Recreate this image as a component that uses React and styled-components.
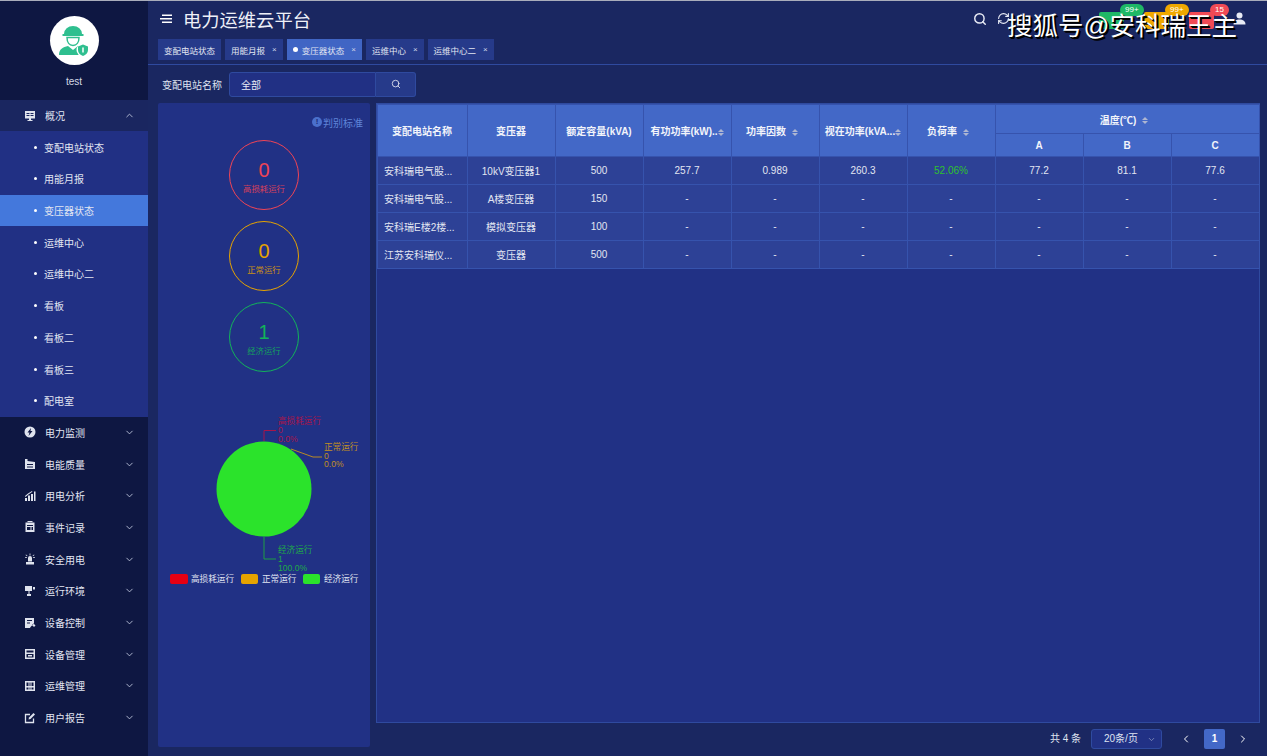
import styled, { createGlobalStyle } from "styled-components";
import { ChevronDown, ChevronUp, ChevronLeft, ChevronRight, Search, RefreshCw } from "lucide-react";

const GlobalStyle = createGlobalStyle`
  html, body {
    margin: 0;
    padding: 0;
    height: 100%;
    background: #1a2761;
  }
  body {
    font-family: "Liberation Sans", "Noto Sans CJK SC", sans-serif;
    overflow: hidden;
  }
  * { box-sizing: border-box; }
`;

const Page = styled.div`
  position: relative;
  display: flex;
  width: 1267px;
  height: 756px;
  border-top: 1px solid #a9adbb;
  overflow: hidden;
`;

const Sidebar = styled.aside`
  flex: 0 0 148px;
  display: flex;
  flex-direction: column;
  background: #0e1742;
`;

const Profile = styled.div`
  height: 99px;
  display: flex;
  flex-direction: column;
  align-items: center;
  padding-top: 15px;
`;

const Avatar = styled.div`
  width: 49px;
  height: 49px;
  border-radius: 50%;
  background: #fff;
  display: flex;
  align-items: center;
  justify-content: center;
`;

const UserName = styled.div`
  margin-top: 11px;
  color: #d5d9e6;
  font-size: 10px;
  line-height: 12px;
`;

const NavRow = styled.div`
  height: ${(p) => (p.$open ? 31.4 : 31.7)}px;
  display: flex;
  align-items: center;
  padding: 0 13px 0 24px;
  color: #e2e6f2;
  font-size: 10px;
  background: ${(p) => (p.$open ? "#1a2660" : "transparent")};
  span { margin-left: 9px; flex: 1; }
  svg.arrow { color: #b8bfd6; }
`;

const SubList = styled.div`
  background: #213084;
`;

const SubRow = styled.div`
  height: 31.7px;
  display: flex;
  align-items: center;
  padding-left: 34px;
  font-size: 10px;
  color: #e2e6f2;
  background: ${(p) => (p.$active ? "#4478dc" : "transparent")};
  &::before {
    content: "";
    width: 3px;
    height: 3px;
    border-radius: 50%;
    background: #fff;
    margin-right: 7px;
  }
`;

const Main = styled.main`
  flex: 1;
  min-width: 0;
  display: flex;
  flex-direction: column;
`;

const Header = styled.header`
  height: 37px;
  display: flex;
  align-items: center;
  padding: 0 21px 2px 12px;
  color: #fff;
`;

const Title = styled.h1`
  margin: 0 auto 0 10px;
  font-size: 18.3px;
  font-weight: 400;
  color: #eef0f8;
`;

const HeaderTool = styled.div`
  display: flex;
  color: #e8ebf5;
  margin-left: ${(p) => p.$gap || 0}px;
`;

const Notice = styled.div`
  position: relative;
  width: 25px;
  height: 17px;
  margin: 4px 0 0 ${(p) => p.$gap}px;
  border-radius: 2px;
  background: ${(p) => p.$color};
`;

const Badge = styled.span`
  position: absolute;
  top: -8px;
  left: 21px;
  height: 12px;
  padding: 0 5px;
  border-radius: 6px;
  background: ${(p) => p.$color};
  color: #fff;
  font-size: 8px;
  line-height: 12px;
  white-space: nowrap;
`;

const Watermark = styled.div`
  position: absolute;
  top: 8px;
  left: 1007px;
  color: #fff;
  font-size: 25.5px;
  line-height: 34px;
  white-space: nowrap;
  text-shadow: 1px 1px 0 #000, 2px 2px 0 #000;
`;

const TabBar = styled.nav`
  height: 27px;
  display: flex;
  gap: 4px;
  padding: 1px 10px 0;
  border-bottom: 1px solid #2f4a9f;
`;

const Tab = styled.div`
  height: 21px;
  display: flex;
  align-items: center;
  gap: 5px;
  padding: 0 6px;
  font-size: 8.5px;
  color: #e2e6f2;
  background: ${(p) => (p.$active ? "#4065c4" : "#263a8a")};
  i {
    font-style: normal;
    font-size: 8px;
    color: #cfd5e8;
    margin-left: 2px;
  }
`;

const ActiveDot = styled.b`
  width: 5px;
  height: 5px;
  border-radius: 50%;
  background: #fff;
  margin-right: -1px;
`;

const FilterRow = styled.div`
  height: 38px;
  display: flex;
  align-items: center;
  padding-left: 14px;
  label {
    font-size: 10px;
    color: #dfe3f0;
    margin-right: 7px;
  }
`;

const SelectBox = styled.div`
  width: 147px;
  height: 25px;
  display: flex;
  align-items: center;
  padding-left: 11px;
  font-size: 10px;
  color: #e8ebf5;
  background: #213084;
  border: 1px solid #2f4a9f;
  border-radius: 3px 0 0 3px;
`;

const SearchButton = styled.div`
  width: 40px;
  height: 25px;
  display: flex;
  align-items: center;
  justify-content: center;
  color: #e8ebf5;
  background: #263a8a;
  border: 1px solid #2f4a9f;
  border-left: none;
  border-radius: 0 3px 3px 0;
`;

const Content = styled.div`
  flex: 1;
  display: flex;
  gap: 6px;
  padding: 0 7px 9px 10px;
  min-height: 0;
`;

const StatusPanel = styled.section`
  flex: 0 0 212px;
  display: flex;
  flex-direction: column;
  align-items: center;
  background: #213185;
  border-radius: 2px;
`;

const JudgeLink = styled.div`
  align-self: flex-end;
  display: flex;
  align-items: center;
  gap: 1px;
  height: 12px;
  margin: 13px 7px 12px 0;
  font-size: 10px;
  color: #5f84d8;
`;

const InfoDot = styled.em`
  width: 10px;
  height: 10px;
  border-radius: 50%;
  background: #4a70cc;
  color: #1b2a78;
  font-style: normal;
  font-weight: 700;
  font-size: 8px;
  line-height: 10px;
  text-align: center;
`;

const StatusCircle = styled.div`
  width: 70px;
  height: 70px;
  margin-bottom: 11px;
  border-radius: 50%;
  border: 1px solid ${(p) => p.$color};
  color: ${(p) => p.$color};
  display: flex;
  flex-direction: column;
  align-items: center;
  justify-content: center;
  strong {
    font-size: 20px;
    line-height: 24px;
    font-weight: 400;
    margin-top: 2px;
  }
  small {
    font-size: 8.4px;
    line-height: 12px;
    margin-top: 1px;
    opacity: 0.85;
  }
`;

const PieChart = styled.svg`
  margin-top: 27px;
  display: block;
  text {
    font-size: 8.6px;
  }
`;

const TableColumn = styled.section`
  flex: 1;
  min-width: 0;
  display: flex;
  flex-direction: column;
`;

const TableWrap = styled.div`
  flex: 0 0 620px;
  background: #213185;
  border: 1px solid #2f4a9f;
`;

const Table = styled.table`
  width: 882px;
  table-layout: fixed;
  border-collapse: collapse;
  font-size: 10px;
  color: #e2e6f2;
  col { width: 88px; }
  col:first-child { width: 90px; }
  th, td {
    border: 1px solid #3653ad;
    text-align: center;
    padding: 0 1px 0 0;
    white-space: nowrap;
    overflow: hidden;
  }
  th {
    background: #4368c7;
    color: #f2f4fa;
    font-weight: 700;
  }
  thead tr:first-child { height: 29px; }
  thead tr:last-child { height: 23px; }
  td { background: #2d4196; height: 28px; }
  td:first-child { text-align: left; padding-left: 6px; }
`;

const SortWrap = styled.span`
  display: inline-flex;
  flex-direction: column;
  gap: 1px;
  margin: 0 ${(p) => (p.$tight ? 0 : 6)}px 0 ${(p) => (p.$tight ? 0 : 6)}px;
  vertical-align: middle;
  &::before, &::after {
    content: "";
    width: 0;
    height: 0;
    border-left: 3px solid transparent;
    border-right: 3px solid transparent;
  }
  &::before { border-bottom: 3px solid #aeb6d2; }
  &::after { border-top: 3px solid #aeb6d2; }
`;

const LoadRate = styled.span`
  color: #2ec22e;
`;

const Pager = styled.div`
  flex: 1;
  min-height: 0;
  display: flex;
  align-items: flex-start;
  justify-content: flex-end;
  font-size: 10px;
  line-height: 20px;
  color: #dfe3f0;
  padding: 6px 7px 0 0;
`;

const PageSize = styled.div`
  width: 71px;
  height: 20px;
  margin: 0 13px 0 10px;
  padding: 0 5px 0 12px;
  display: flex;
  align-items: center;
  justify-content: space-between;
  background: #213185;
  border: 1px solid #2f4a9f;
  border-radius: 3px;
  svg { color: #8f9ac2; }
`;

const PageLink = styled.div`
  width: 21px;
  height: 20px;
  margin-left: ${(p) => p.$gap || 0}px;
  display: flex;
  align-items: center;
  justify-content: center;
  border-radius: 2px;
  color: #fff;
  font-weight: ${(p) => (p.$active ? 700 : 400)};
  background: ${(p) => (p.$active ? "#4368c7" : "transparent")};
`;

const WorkerIcon = () => (
  <svg width="34" height="34" viewBox="0 0 34 34" fill="#2fbf8f">
    <path d="M7 10a9 8 0 0 1 18 0h1.5v2h-21v-2z" />
    <path d="M10 13.5h12c0 5-2.5 8-6 8s-6-3-6-8z" fill="none" stroke="#2fbf8f" strokeWidth="1.5" />
    <path d="M2 31c0-6 4-8 9-9l5 4 5-4c2 .4 3 1 4 1.5V31z" />
    <circle cx="26" cy="26" r="6.5" fill="#fff" />
    <path d="M26 20.5l5 2v3.5c0 3-2.2 5-5 6-2.8-1-5-3-5-6v-3.5z" />
    <path d="M26 23.5v5" stroke="#fff" strokeWidth="1.5" />
  </svg>
);

const iconPaths = {
  monitor: "M1 1h10v7.5H7V10h1.5v1h-5v-1H5V8.5H1zM2.500 3v1h3V3zm4 0v1h3V3zm-4 2v1h3V5zm4 0v1h3V5z",
  power: "M6 .5a5.5 5.5 0 1 0 0 11 5.5 5.5 0 0 0 0-11zM7 2L3.5 6.5h2L4.5 10l4-5h-2z",
  quality: "M1 1h2.5v2l7.5 1v7H1zM3 6v1h6V6zm0 2.5v1h6v-1z",
  usage: "M1 8h2v3H1zm3-2.5h2V11H4zM7 4h2v7H7zm3-2.500h1.500V11H10zM1 6l3-2.5L8 1l.4.7-4 2.800L1.5 7z",
  event: "M1.500 1.500h9V11h-9zM3.500 0h5v2h-5zM3 4v1h6V4zm0 2v3h3.500V6zm4.500 0v3H9V6z",
  safety: "M4 5a2 2 0 0 1 4 0v3.500H4zM2 9h8v2.500H2zM5.600 .5h.8v2h-.8zM1 4h2v.8H1zm8 0h2v.8H9zM2 1.500l1.500 1.200-.5.6L1.500 2zm8 0l.5.5L9 3.300l-.5-.6z",
  environment: "M1 1h7v5H5.500v3H7v2H3V9h1.500V6H1zM9 2h2v2.500H9z",
  control: "M1 1h9v5.500L6.500 10 6 11H1zm2 2v1h5V3zm0 2.500v1h3v-1zM8 8l1.500-1.500 2 2L10 10z",
  device: "M1 1h10v10H1zm1.500 1.500v2h7v-2zm0 3.500v3.500h7V6zM4 7h4v1.500H4z",
  ops: "M1 1h10v10H1zm1.500 1.500V6h2V2.500zm3 0V6h1V2.500zm2 0V6h2V2.500zM2.500 7.500v2h2v-2zm3 0v2h1v-2zm2 0v2h2v-2z",
};

const NavIcon = ({ name }) => (
  <svg width="12" height="12" viewBox="0 0 12 12" fill="#dfe3ee" fillRule="evenodd">
    {name === "report" ? (
      <>
        <path d="M9.500 6.500v4h-8v-8H6" fill="none" stroke="#dfe3ee" strokeWidth="1.3" />
        <path d="M4.500 7.500l.5-2L9.500 1 11 2.500 6.500 7z" />
      </>
    ) : (
      <path d={iconPaths[name]} />
    )}
  </svg>
);

const MenuFold = () => (
  <svg width="13" height="12" viewBox="0 0 13 12" fill="#fff">
    <rect x="2" y="1.5" width="10" height="1.5" />
    <rect x="0" y="5" width="12" height="1.5" />
    <rect x="2" y="8.5" width="10" height="1.5" />
  </svg>
);

const UserIcon = () => (
  <svg width="13" height="13" viewBox="0 0 13 13" fill="#e8ebf5">
    <circle cx="6.5" cy="3.5" r="3" />
    <path d="M.5 12.500c0-3.500 2.500-5 6-5s6 1.500 6 5z" />
  </svg>
);

const subMenu = ["变配电站状态", "用能月报", "变压器状态", "运维中心", "运维中心二", "看板", "看板二", "看板三", "配电室"];

const mainMenu = [
  ["power", "电力监测"],
  ["quality", "电能质量"],
  ["usage", "用电分析"],
  ["event", "事件记录"],
  ["safety", "安全用电"],
  ["environment", "运行环境"],
  ["control", "设备控制"],
  ["device", "设备管理"],
  ["ops", "运维管理"],
  ["report", "用户报告"],
];

const tabs = [
  { label: "变配电站状态" },
  { label: "用能月报", close: true },
  { label: "变压器状态", close: true, active: true },
  { label: "运维中心", close: true },
  { label: "运维中心二", close: true },
];

const rows = [
  ["安科瑞电气股...", "10kV变压器1", "500", "257.7", "0.989", "260.3", "52.06%", "77.2", "81.1", "77.6"],
  ["安科瑞电气股...", "A楼变压器", "150", "-", "-", "-", "-", "-", "-", "-"],
  ["安科瑞E楼2楼...", "模拟变压器", "100", "-", "-", "-", "-", "-", "-", "-"],
  ["江苏安科瑞仪...", "变压器", "500", "-", "-", "-", "-", "-", "-", "-"],
];

const Chart = () => (
  <PieChart width="212" height="180" viewBox="0 0 212 180">
    <circle cx="106" cy="79" r="47.5" fill="#2be32b" />
    <g fill="none" strokeWidth="1">
      <path d="M106 31V20.5H118" stroke="#a8154a" />
      <path d="M133 39L155 47H164" stroke="#b98a25" />
      <path d="M106 126V149H118" stroke="#1f9e45" />
    </g>
    <g fill="#a8154a">
      <text x="120" y="14">高损耗运行</text>
      <text x="120" y="23">0</text>
      <text x="120" y="32">0.0%</text>
    </g>
    <g fill="#c08f24">
      <text x="166" y="40">正常运行</text>
      <text x="166" y="48.5">0</text>
      <text x="166" y="57">0.0%</text>
    </g>
    <g fill="#1fa84a">
      <text x="120" y="143">经济运行</text>
      <text x="120" y="152">1</text>
      <text x="120" y="161">100.0%</text>
    </g>
    <rect x="12" y="164" width="18" height="10" rx="2" fill="#e60012" />
    <rect x="83" y="164" width="17" height="10" rx="2" fill="#e6a300" />
    <rect x="145" y="164" width="17" height="10" rx="2" fill="#2be32b" />
    <g fill="#e2e6f2">
      <text x="33" y="172">高损耗运行</text>
      <text x="104" y="172">正常运行</text>
      <text x="166" y="172">经济运行</text>
    </g>
  </PieChart>
);

const App = () => (
  <>
    <GlobalStyle />
    <Page>
      <Sidebar>
        <Profile>
          <Avatar>
            <WorkerIcon />
          </Avatar>
          <UserName>test</UserName>
        </Profile>
        <NavRow $open>
          <NavIcon name="monitor" />
          <span>概况</span>
          <ChevronUp className="arrow" size={11} />
        </NavRow>
        <SubList>
          {subMenu.map((item) => (
            <SubRow key={item} $active={item === "变压器状态"}>
              {item}
            </SubRow>
          ))}
        </SubList>
        {mainMenu.map(([icon, label]) => (
          <NavRow key={label}>
            <NavIcon name={icon} />
            <span>{label}</span>
            <ChevronDown className="arrow" size={11} />
          </NavRow>
        ))}
      </Sidebar>

      <Main>
        <Header>
          <MenuFold />
          <Title>电力运维云平台</Title>
          <HeaderTool>
            <Search size={14} strokeWidth={2.5} />
          </HeaderTool>
          <HeaderTool $gap={10}>
            <RefreshCw size={13} strokeWidth={2} />
          </HeaderTool>
          <Notice $gap={89} $color="#1fb866">
            <Badge $color="#1fb866">99+</Badge>
          </Notice>
          <Notice $gap={20} $color="#f0a800">
            <Badge $color="#f0a800">99+</Badge>
          </Notice>
          <Notice $gap={20} $color="#f04a55">
            <Badge $color="#f04a55">15</Badge>
          </Notice>
          <HeaderTool $gap={19}>
            <UserIcon />
          </HeaderTool>
        </Header>

        <TabBar>
          {tabs.map((tab) => (
            <Tab key={tab.label} $active={tab.active}>
              {tab.active && <ActiveDot />}
              {tab.label}
              {tab.close && <i>×</i>}
            </Tab>
          ))}
        </TabBar>

        <FilterRow>
          <label>变配电站名称</label>
          <SelectBox>全部</SelectBox>
          <SearchButton>
            <Search size={10} />
          </SearchButton>
        </FilterRow>

        <Content>
          <StatusPanel>
            <JudgeLink>
              <InfoDot>!</InfoDot>
              判别标准
            </JudgeLink>
            <StatusCircle $color="#f04455">
              <strong>0</strong>
              <small>高损耗运行</small>
            </StatusCircle>
            <StatusCircle $color="#e6a300">
              <strong>0</strong>
              <small>正常运行</small>
            </StatusCircle>
            <StatusCircle $color="#12b35a">
              <strong>1</strong>
              <small>经济运行</small>
            </StatusCircle>
            <Chart />
          </StatusPanel>

          <TableColumn>
            <TableWrap>
              <Table>
                <colgroup>
                  {Array.from({ length: 10 }, (_, i) => (
                    <col key={i} />
                  ))}
                </colgroup>
                <thead>
                  <tr>
                    <th rowSpan="2">变配电站名称</th>
                    <th rowSpan="2">变压器</th>
                    <th rowSpan="2">额定容量(kVA)</th>
                    <th rowSpan="2">
                      有功功率(kW)..
                      <SortWrap $tight />
                    </th>
                    <th rowSpan="2">
                      功率因数
                      <SortWrap />
                    </th>
                    <th rowSpan="2">
                      视在功率(kVA...
                      <SortWrap $tight />
                    </th>
                    <th rowSpan="2">
                      负荷率
                      <SortWrap />
                    </th>
                    <th colSpan="3">
                      温度(℃)
                      <SortWrap />
                    </th>
                  </tr>
                  <tr>
                    <th>A</th>
                    <th>B</th>
                    <th>C</th>
                  </tr>
                </thead>
                <tbody>
                  {rows.map((row, r) => (
                    <tr key={r}>
                      {row.map((cell, c) => (
                        <td key={c}>
                          {cell.endsWith("%") ? <LoadRate>{cell}</LoadRate> : cell}
                        </td>
                      ))}
                    </tr>
                  ))}
                </tbody>
              </Table>
            </TableWrap>
            <Pager>
              共 4 条
              <PageSize>
                20条/页
                <ChevronDown size={9} />
              </PageSize>
              <PageLink>
                <ChevronLeft size={12} />
              </PageLink>
              <PageLink $active $gap={8}>1</PageLink>
              <PageLink $gap={7}>
                <ChevronRight size={12} />
              </PageLink>
            </Pager>
          </TableColumn>
        </Content>
      </Main>
      <Watermark>搜狐号@安科瑞王主</Watermark>
    </Page>
  </>
);

export default App;
